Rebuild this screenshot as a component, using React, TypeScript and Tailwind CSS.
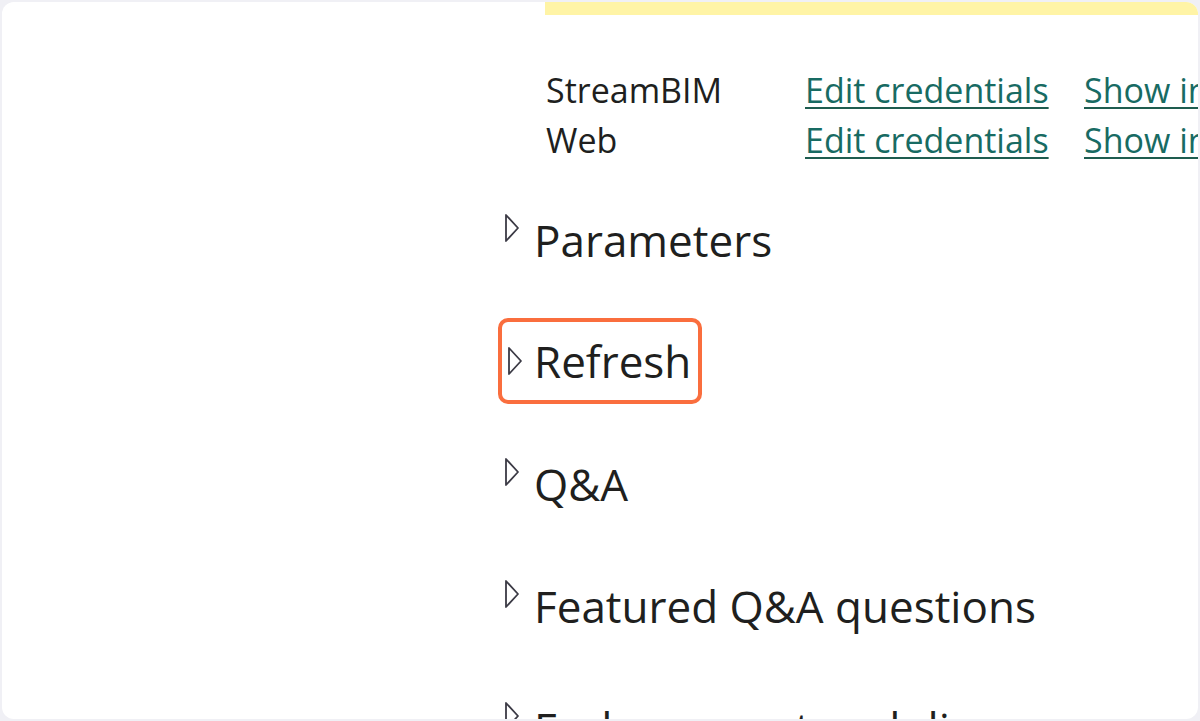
import React from "react";

const sources = [
  { name: "StreamBIM" },
  { name: "Web" },
];

const sections = ["Parameters", "Refresh", "Q&A", "Featured Q&A questions", "Endorsement and discovery"];

function Caret() {
  return (
    <svg width="18" height="30" viewBox="0 0 18 30" className="shrink-0">
      <polygon points="3,2 15,15 3,28" fill="none" stroke="#3b3a45" strokeWidth="1.8" strokeLinejoin="round" />
    </svg>
  );
}

export default function App() {
  return (
    <div className="h-[721px] w-[1200px] overflow-hidden bg-[#f0f0f5] p-[2px]" style={{ fontFamily: '"Open Sans", "Noto Sans", sans-serif' }}>
      <div className="h-full w-full overflow-hidden rounded-xl bg-white pl-[496px] text-[#201f1e]">
        {/* banner edge */}
        <div className="ml-[47px] h-[13px] w-[900px] bg-[#fff4a6]" />

        {/* data source credentials */}
        <div className="ml-[48px] mt-[50px] w-[900px]">
          {sources.map((s) => (
            <div key={s.name} className="flex h-[50px] items-center whitespace-nowrap text-[34px] leading-[50px]">
              <span className="w-[259px]">{s.name}</span>
              <a className="w-[279px] text-[#186b63] underline decoration-[#1e5c4f] decoration-2 underline-offset-4">
                Edit credentials
              </a>
              <a className="text-[#186b63] underline decoration-[#1e5c4f] decoration-2 underline-offset-4">
                Show in lineage view
              </a>
            </div>
          ))}
        </div>

        {/* collapsible sections */}
        <div className="mt-[33px] flex flex-col">
          {sections.map((label) => (
            <div key={label} className="h-[122px]">
              {label === "Refresh" ? (
                <div className="-mt-[2px] inline-flex h-[86px] items-center gap-[10px] rounded-[10px] border-4 border-[#fa6e3e] pl-[4px] pr-[7px]">
                  <Caret />
                  <span className="whitespace-nowrap text-[44px] leading-[60px]">{label}</span>
                </div>
              ) : (
                <div className="flex items-start gap-[13px] pl-[5px] pt-[12px]">
                  <div className="pt-[3px]">
                    <Caret />
                  </div>
                  <span className="whitespace-nowrap text-[44px] leading-[60px]">{label}</span>
                </div>
              )}
            </div>
          ))}
        </div>
      </div>
    </div>
  );
}
